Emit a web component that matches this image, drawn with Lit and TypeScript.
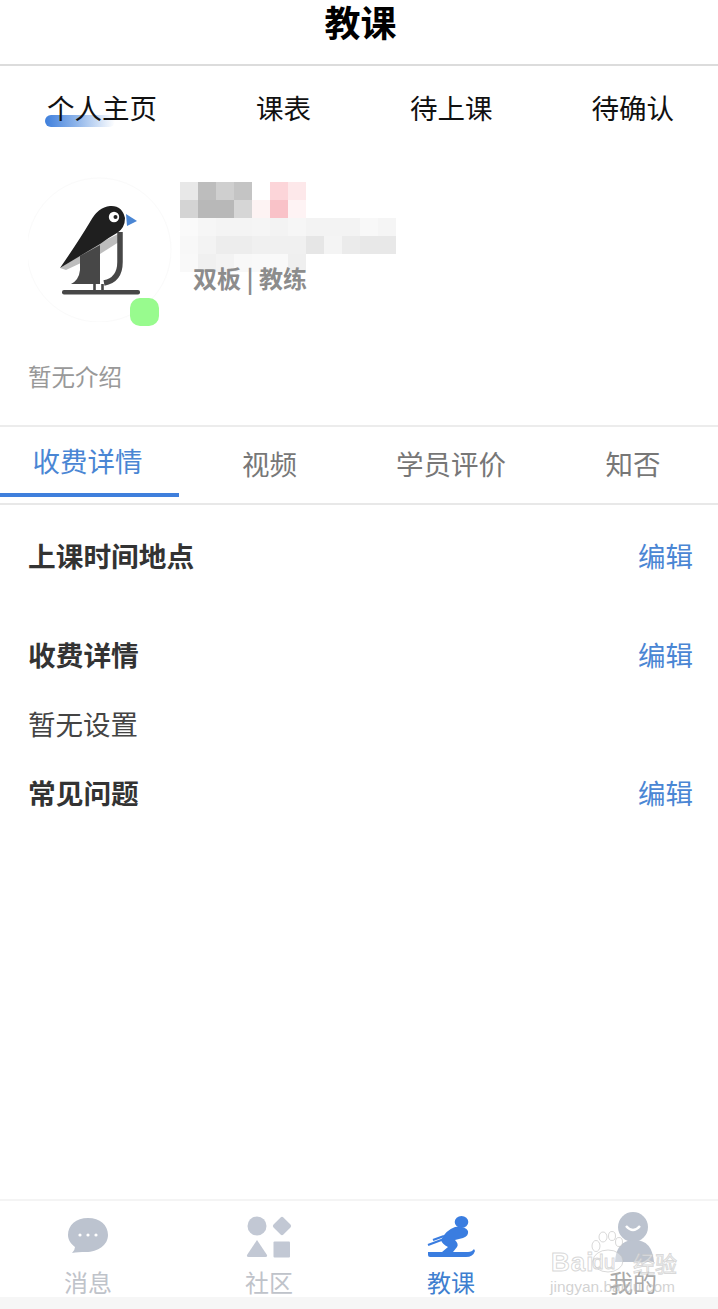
import { LitElement, html, css, svg } from "lit";
import { customElement } from "lit/decorators.js";

const MOSAIC: string[][] = [
  ["#e8e8e8", "#bdbdbd", "#cfcfcf", "#c4c4c4", "#ffffff", "#fcd5d9", "#fde8ea", "#fff", "#fff", "#fff", "#fff", "#fff"],
  ["#d4d4d4", "#b8b8b8", "#b8b8b8", "#d6d6d6", "#fdf3f3", "#f9c2c8", "#fef3f4", "#fff", "#fff", "#fff", "#fff", "#fff"],
  ["#fafafa", "#f6f6f6", "#f4f4f4", "#f4f4f4", "#f5f5f5", "#f3f3f3", "#f6f6f6", "#f3f3f3", "#f3f3f3", "#f3f3f3", "#f8f8f8", "#f5f5f5"],
  ["#f8f8f8", "#f3f3f3", "#ededed", "#ededed", "#f0f0f0", "#f0f0f0", "#f0f0f0", "#e6e6e6", "#f4f4f4", "#ebebeb", "#e8e8e8", "#e8e8e8"],
  ["#f9f9f9", "#f0f0f0", "#f3f3f3", "#f8f8f8", "#f9f9f9", "#f9f9f9", "#efefef", "#fff", "#fff", "#fff", "#fff", "#fff"],
];

@customElement("app-root")
export class AppRoot extends LitElement {
  static styles = css`
    :host {
      display: block;
      width: 718px;
      height: 1309px;
      overflow: hidden;
      background: #fff;
      font-family: "Noto Sans CJK SC", "Noto Sans", sans-serif;
    }
    .page { display: flex; flex-direction: column; height: 1309px; }
    .title {
      height: 64px;
      border-bottom: 2px solid #dcdcdc;
      display: flex;
      align-items: center;
      justify-content: center;
      font-size: 36px;
      font-weight: 700;
      color: #000;
      line-height: 36px;
    }
    .title span { margin: -22px 0 0 3px; }
    .topnav {
      display: flex;
      justify-content: space-between;
      padding: 21px 44px 0 47px;
      height: 40px;
      font-size: 27.5px;
      line-height: 40px;
      color: #111;
    }
    .topnav .item { position: relative; }
    .topnav .item span { position: relative; }
    .pill {
      position: absolute;
      left: -2px;
      top: 28px;
      width: 70px;
      height: 12px;
      border-radius: 6px;
      background: linear-gradient(90deg, #3f7fdc 0%, #8fb5ea 45%, rgba(255, 255, 255, 0) 100%);
    }
    .profile {
      display: flex;
      padding: 50px 0 0 28px;
      height: 155px;
    }
    .avatar { position: relative; width: 145px; height: 145px; flex: none; }
    .avatar svg { display: block; }
    .online {
      position: absolute;
      left: 102px;
      top: 121px;
      width: 29px;
      height: 28px;
      border-radius: 10px;
      background: #98fb8e;
    }
    .info { margin-left: 7px; padding-top: 5px; }
    .mosaic { display: grid; grid-template-columns: repeat(12, 18px); grid-auto-rows: 18px; }
    .mosaic div { width: 18px; height: 18px; }
    .role {
      margin: -11px 0 0 13px;
      position: relative;
      font-size: 24px;
      line-height: 34px;
      font-weight: 700;
      color: #8c8c8c;
      white-space: nowrap;
    }
    .intro {
      padding-left: 28px;
      font-size: 23.5px;
      line-height: 34px;
      color: #999;
      margin-top: 27px;
    }
    .tabs {
      margin-top: 32px;
      border-top: 2px solid #ececec;
      border-bottom: 2px solid #e8e8e8;
      display: grid;
      grid-template-columns: 179px 181px 182px 176px;
      height: 76px;
      font-size: 27.5px;
      color: #777;
    }
    .tab { display: flex; align-items: center; justify-content: center; height: 71px; }
    .tab.active { color: #4a86d4; height: 66px; border-bottom: 4px solid #3f7fdc; padding-right: 4px; box-sizing: content-box; width: 175px; }
    .tab.last { padding-left: 6px; }
    .row {
      display: flex;
      justify-content: space-between;
      padding: 0 25px 0 28px;
      line-height: 40px;
      height: 40px;
      font-size: 27.5px;
    }
    .row b { color: #333; font-weight: 700; font-size: 27.7px; }
    .row a { color: #4a86d4; }
    .r1 { margin-top: 30px; }
    .r2 { margin-top: 59px; }
    .r3 { margin-top: 29px; }
    .plain { padding-left: 28px; margin-top: 29px; font-size: 27.5px; line-height: 40px; height: 40px; color: #444; }
    .nav {
      margin-top: auto;
      position: relative;
      height: 96px;
      border-top: 2px solid #f4f4f4;
      display: grid;
      grid-template-columns: 176px 186px 178px 178px;
      margin-bottom: 12px;
    }
    .nitem { display: flex; flex-direction: column; align-items: center; color: #bfc3ca; font-size: 24px; line-height: 30px; }
    .nitem svg { display: block; width: 60px; height: 66px; flex: none; }
    .nitem span { display: block; }
    .nitem.on { color: #3f7fd0; }
    .nitem.me { color: #a9a9a9; padding-left: 8px; }
    .bottomfill { position: absolute; left: 0; right: 0; top: 96px; height: 12px; background: #f6f6f6; }
    .wm { position: absolute; left: 550px; top: 30px; width: 135px; height: 66px; pointer-events: none; }
    .wm svg { position: absolute; left: 40px; top: 0; }
    .wm .t {
      position: absolute;
      font-family: "Liberation Sans", sans-serif;
      line-height: 32px;
      font-weight: 700;
      color: rgba(255, 255, 255, 0.55);
      -webkit-text-stroke: 1px rgba(195, 195, 195, 0.65);
      white-space: nowrap;
    }
    .wm .bai { left: 1px; top: 15px; font-size: 26px; letter-spacing: 1px; }
    .wm .du { left: 42px; top: 15px; font-size: 21px; font-weight: 400; }
    .wm .jy { left: 83px; top: 15px; font-size: 22px; font-weight: 400; font-family: "Noto Sans CJK SC", sans-serif; }
    .wm .url {
      position: absolute;
      left: 0;
      top: 46px;
      font-family: "Liberation Sans", sans-serif;
      font-size: 15.5px;
      line-height: 20px;
      color: rgba(190, 190, 190, 0.7);
      white-space: nowrap;
    }
  `;

  private bird() {
    return svg`<svg width="145" height="145" viewBox="28 177 145 145">
      <circle cx="99" cy="250" r="72" fill="#fff" stroke="#fafafa" stroke-width="1"/>
      <path d="M60 268 L98 244 L118 234 L122 240 L100 254 L66 270 Z" fill="#bdbdbd"/>
      <path d="M80 256 L100 245 V284 H71 Q79 280 80 270 Z" fill="#474747"/>
      <path d="M120 232 V262 Q120 280 104 283" fill="none" stroke="#474747" stroke-width="5.5"/>
      <path d="M60 268 Q78 242 90 222 Q98 207 110 206 Q122 205 125 218 Q125 228 117 233 Q108 238 100 244 Z" fill="#1f1f1f"/>
      <circle cx="114" cy="217" r="5.2" fill="#fff"/>
      <circle cx="115.5" cy="217" r="2" fill="#222"/>
      <path d="M126 214 L137 221 L127 226 Z" fill="#4a86d4"/>
      <path d="M94.5 284 V291 M102.5 284 V291" stroke="#474747" stroke-width="2.6" fill="none"/>
      <rect x="62" y="290" width="78" height="4.5" rx="2" fill="#474747"/>
    </svg>`;
  }

  private chat() {
    return svg`<svg viewBox="58 1201 60 66">
      <path d="M88 1218 C100 1218 108 1225 108 1235 C108 1245 98 1252 86 1252 C81 1252 76 1252 72 1253 Q75 1250 75 1247 C71 1244 68 1240 68 1235 C68 1225 76 1218 88 1218 Z" fill="#bcc3cf"/>
      <circle cx="80" cy="1235" r="1.6" fill="#fff"/><circle cx="88" cy="1235" r="1.6" fill="#fff"/><circle cx="96" cy="1235" r="1.6" fill="#fff"/>
    </svg>`;
  }
  private shapes() {
    return svg`<svg viewBox="239 1201 60 66" fill="#c2c8d4">
      <circle cx="257" cy="1226" r="9.5"/>
      <rect x="275" y="1219" width="14" height="14" rx="2" transform="rotate(45 282 1226)"/>
      <path d="M257 1240 L267 1255 Q267.5 1257 265.5 1257 H248.5 Q246.5 1257 247 1255 Z"/>
      <rect x="273.5" y="1241.5" width="16.5" height="16" rx="1"/>
    </svg>`;
  }
  private ski() {
    return svg`<svg viewBox="421 1201 60 66" fill="#3a7de0">
      <ellipse cx="461.5" cy="1222" rx="6.8" ry="6"/>
      <path d="M441 1240 Q446 1230 455 1227 Q465 1226 468 1231 Q469 1236 463 1238 L455 1240 Q459 1244 457 1247 L453 1252 H442 L448 1247 Q442 1244 441 1240 Z"/>
      <path d="M428 1245 L444 1239 M433 1240 L444 1236" stroke="#3a7de0" stroke-width="2.2" fill="none"/>
      <path d="M428 1252 H468 Q472 1252 474 1249 L475 1251 Q473 1257 466 1257 H430 Q428 1257 428 1255 Z"/>
    </svg>`;
  }
  private person() {
    return svg`<svg viewBox="603 1201 60 66">
      <circle cx="633" cy="1227" r="15" fill="#bcc3cf"/>
      <path d="M626 1226 Q633 1234 640 1226" fill="none" stroke="#fff" stroke-width="2.4"/>
      <path d="M615 1262 Q616 1241 633 1240 Q652 1239 654 1262 Z" fill="#bcc3cf"/>
    </svg>`;
  }
  private paw() {
    return svg`<svg width="40" height="42" viewBox="0 0 40 42" fill="rgba(255,255,255,.55)" stroke="rgba(190,190,190,.6)" stroke-width="1">
      <ellipse cx="6" cy="15" rx="4" ry="5.5"/><ellipse cx="13" cy="6" rx="4" ry="5"/>
      <ellipse cx="22" cy="5" rx="3.5" ry="4.5"/><ellipse cx="29" cy="11" rx="3.5" ry="4.5"/>
      <ellipse cx="18" cy="30" rx="15" ry="11" fill="rgba(255,255,255,.35)"/>
    </svg>`;
  }

  render() {
    return html`<div class="page">
      <div class="title"><span>教课</span></div>
      <div class="topnav">
        <div class="item"><div class="pill"></div><span>个人主页</span></div>
        <div class="item"><span>课表</span></div>
        <div class="item"><span>待上课</span></div>
        <div class="item"><span>待确认</span></div>
      </div>
      <div class="profile">
        <div class="avatar">${this.bird()}<div class="online"></div></div>
        <div class="info">
          <div class="mosaic">
            ${MOSAIC.flat().map((c) => html`<div style="background:${c}"></div>`)}
          </div>
          <div class="role">双板 | 教练</div>
        </div>
      </div>
      <div class="intro">暂无介绍</div>
      <div class="tabs">
        <div class="tab active">收费详情</div>
        <div class="tab">视频</div>
        <div class="tab">学员评价</div>
        <div class="tab last">知否</div>
      </div>
      <div class="row r1"><b>上课时间地点</b><a>编辑</a></div>
      <div class="row r2"><b>收费详情</b><a>编辑</a></div>
      <div class="plain">暂无设置</div>
      <div class="row r3"><b>常见问题</b><a>编辑</a></div>
      <div class="nav">
        <div class="nitem">${this.chat()}<span>消息</span></div>
        <div class="nitem">${this.shapes()}<span>社区</span></div>
        <div class="nitem on">${this.ski()}<span>教课</span></div>
        <div class="nitem me">${this.person()}<span>我的</span></div>
        <div class="bottomfill"></div>
        <div class="wm">
          ${this.paw()}
          <div class="t bai">Bai</div>
          <div class="t du">du</div>
          <div class="t jy">经验</div>
          <div class="url">jingyan.baidu.com</div>
        </div>
      </div>
    </div>`;
  }
}
